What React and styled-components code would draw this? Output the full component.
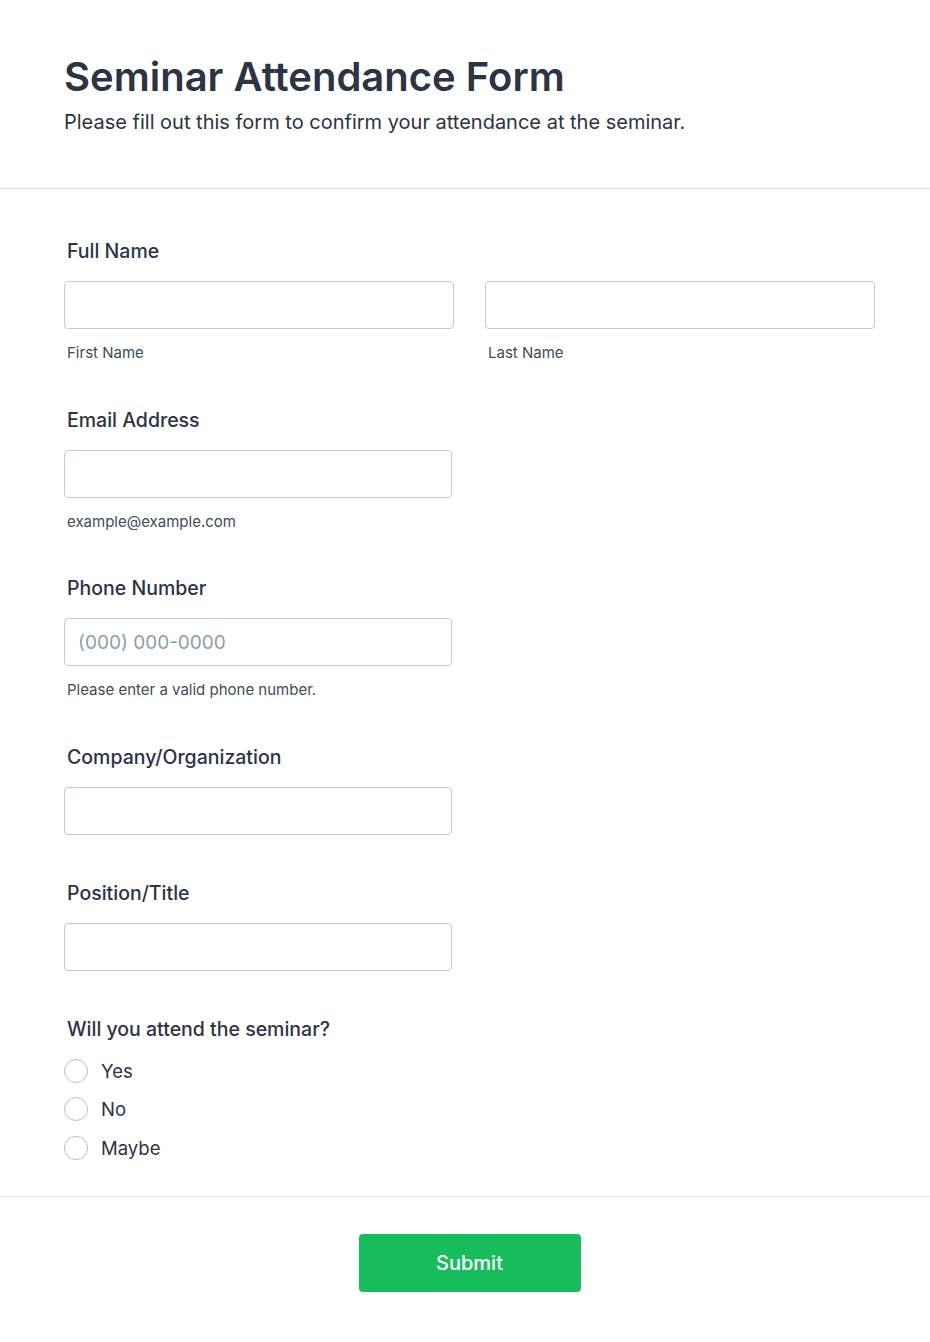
import React from "react";
import styled, { createGlobalStyle } from "styled-components";

const Global = createGlobalStyle`
  * { box-sizing: border-box; }
  html, body { margin: 0; padding: 0; background: #ffffff; }
  body { font-family: Inter, "Noto Sans", sans-serif; color: #2c3345; }
`;

const Page = styled.div`
  width: 930px;
  min-height: 1342px;
  background: #fff;
`;

const Header = styled.header`
  padding: 53px 55px 54px 64px;
  border-bottom: 1px solid #d8dae9;
`;

const Title = styled.h1`
  margin: 0;
  font-size: 40px;
  line-height: 48px;
  font-weight: 600;
  color: #2c3345;
`;

const Subtitle = styled.p`
  margin: 9px 0 0;
  font-size: 20px;
  line-height: 24px;
  font-weight: 400;
  color: #2c3345;
`;

const Body = styled.div`
  padding: 50px 55px 29px 64px;
  border-bottom: 1px solid #e6e8ef;
`;

const Field = styled.div`
  padding-bottom: ${(p) => (p.$sub ? 46.5 : 46)}px;
  &:last-child { padding-bottom: 0; }
`;

const Label = styled.div`
  font-size: 19.5px;
  line-height: 24px;
  font-weight: 500;
  color: #2c3345;
  padding-left: 3px;
  margin-bottom: ${(p) => (p.$tight ? 11 : 18)}px;
`;

const Row = styled.div`
  display: grid;
  grid-template-columns: 1fr 1fr;
  gap: 31px;
`;

const Col = styled.div`
  display: flex;
  flex-direction: column;
`;

const Input = styled.input`
  display: block;
  width: ${(p) => (p.$full ? "100%" : "388px")};
  height: 48px;
  border: 1px solid #c3cad8;
  border-radius: 4px;
  background: #fff;
  padding: 0 13px;
  font-family: Inter, "Noto Sans", sans-serif;
  font-size: 19px;
  color: #2c3345;
  outline: none;
  &::placeholder { color: #8f9ab0; }
`;

const Sub = styled.div`
  margin-top: 15px;
  padding-left: 3px;
  font-size: 15px;
  line-height: 17px;
  color: #3f4a5e;
`;

const Options = styled.div`
  display: flex;
  flex-direction: column;
`;

const Option = styled.label`
  display: flex;
  align-items: center;
  height: 38.5px;
  gap: 13px;
  font-size: 18.5px;
  color: #2c3345;
  cursor: pointer;
`;

const Circle = styled.span`
  width: 24px;
  height: 24px;
  border-radius: 50%;
  border: 1px solid #b8bdc9;
  background: #fff;
  flex-shrink: 0;
`;

const Footer = styled.div`
  padding: 37px 55px 51px 64px;
  display: flex;
  justify-content: center;
`;

const Submit = styled.button`
  width: 222px;
  height: 58px;
  border: none;
  border-radius: 4px;
  background: #18bd5b;
  color: #fff;
  font-family: Inter, "Noto Sans", sans-serif;
  font-size: 20px;
  font-weight: 500;
  cursor: pointer;
`;

export default function App() {
  return (
    <Page>
      <Global />
      <Header>
        <Title>Seminar Attendance Form</Title>
        <Subtitle>Please fill out this form to confirm your attendance at the seminar.</Subtitle>
      </Header>
      <Body>
        <Field $sub>
          <Label>Full Name</Label>
          <Row>
            <Col>
              <Input $full />
              <Sub>First Name</Sub>
            </Col>
            <Col>
              <Input $full />
              <Sub>Last Name</Sub>
            </Col>
          </Row>
        </Field>
        <Field $sub>
          <Label>Email Address</Label>
          <Input />
          <Sub>example@example.com</Sub>
        </Field>
        <Field $sub>
          <Label>Phone Number</Label>
          <Input placeholder="(000) 000-0000" />
          <Sub>Please enter a valid phone number.</Sub>
        </Field>
        <Field>
          <Label>Company/Organization</Label>
          <Input />
        </Field>
        <Field>
          <Label>Position/Title</Label>
          <Input />
        </Field>
        <Field>
          <Label $tight>Will you attend the seminar?</Label>
          <Options>
            {["Yes", "No", "Maybe"].map((o) => (
              <Option key={o}>
                <Circle />
                {o}
              </Option>
            ))}
          </Options>
        </Field>
      </Body>
      <Footer>
        <Submit>Submit</Submit>
      </Footer>
    </Page>
  );
}
